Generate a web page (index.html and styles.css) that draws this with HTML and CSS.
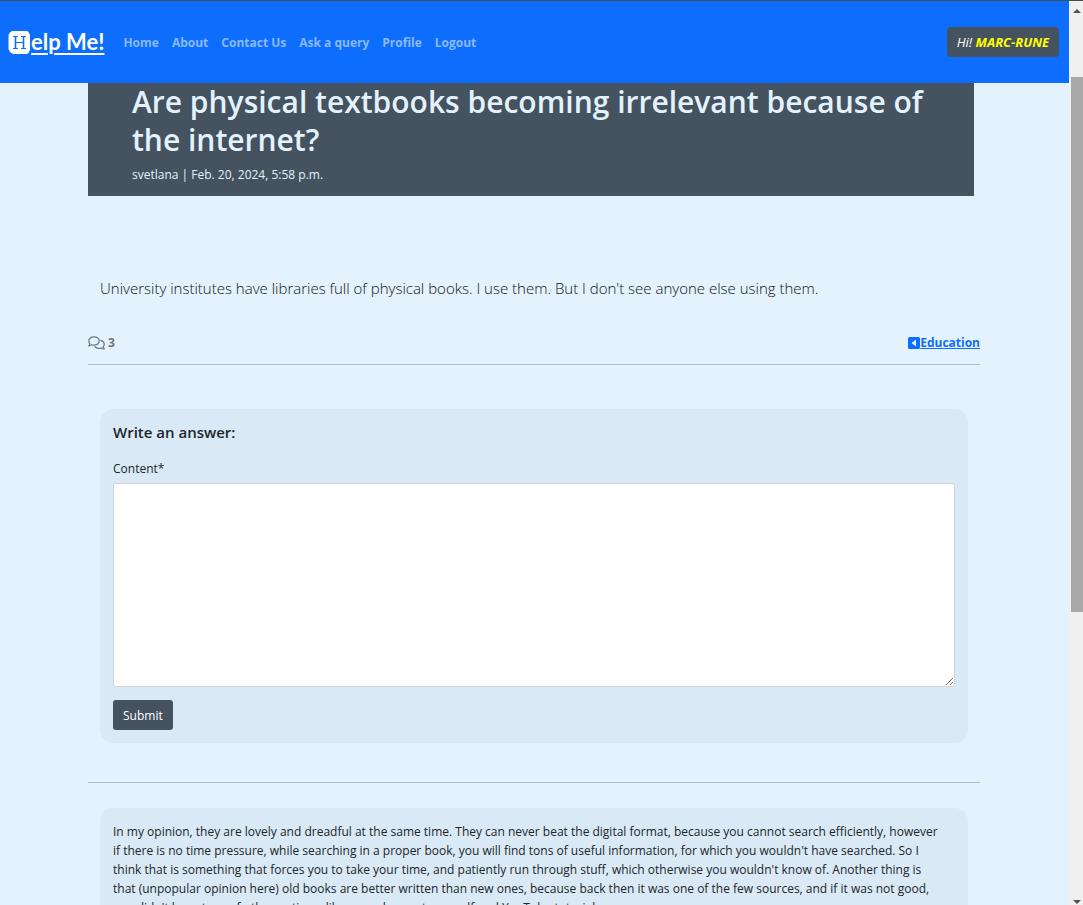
FILE: index.html
```html
<!DOCTYPE html>
<html lang="en">
<head>
<meta charset="utf-8">
<meta name="viewport" content="width=device-width, initial-scale=1">
<title>Help Me!</title>
<link rel="stylesheet" href="styles.css">
</head>
<body>
<div class="viewport">
  <header class="navbar">
    <a class="brand" href="#"><svg class="brand-mark" viewBox="0 0 23 23" aria-hidden="true"><path fill="#fff" d="M4 0h15l1.500 1 1.500 3v15l-1.500 3-1.500 1H5l-3-2-1.500-3V4L2 1.500z"/><path fill="none" stroke="#0d6efd" stroke-width="1" d="M5 5.500h5M13 5.500h5M5 17.500h5M13 17.500h5M8 11.500h7"/><path fill="none" stroke="#0d6efd" stroke-width="1.600" d="M7.500 5.500v12M15.500 5.500v12"/></svg><span class="brand-text">elp Me!</span></a>
    <nav class="links">
      <a href="#">Home</a>
      <a href="#">About</a>
      <a href="#">Contact Us</a>
      <a href="#">Ask a query</a>
      <a href="#">Profile</a>
      <a href="#">Logout</a>
    </nav>
    <button class="user" type="button">Hi! <strong>MARC-RUNE</strong></button>
  </header>
  <main class="page">
    <section class="hero">
      <h1>Are physical textbooks becoming irrelevant because of the internet?</h1>
      <p class="byline">svetlana | Feb. 20, 2024, 5:58 p.m.</p>
    </section>
    <p class="question">University institutes have libraries full of physical books. I use them. But I don't see anyone else using them.</p>
    <div class="meta">
      <span class="count"><svg class="comments" viewBox="0 0 17 14" aria-hidden="true"><path fill="none" stroke="#6c757d" stroke-width="1.200" stroke-linejoin="round" d="M6 .8c3 0 5.200 1.900 5.200 4.200S9 9.200 6 9.200c-.9 0-1.700-.1-2.400-.4C2.800 9.400 1.800 9.800.7 9.800c.6-.6 1-1.300 1.100-2.100C1.100 6.900.8 6 .8 5 .8 2.700 3 .8 6 .8zM12.300 4.300c2.300.4 3.900 2 3.900 3.900 0 1-.4 1.900-1.100 2.600.1.800.6 1.500 1.200 2.200-1.200 0-2.200-.4-3-1-.7.300-1.500.4-2.300.4-1.900 0-3.500-.8-4.400-2"/></svg>3</span>
      <a class="category" href="#"><svg class="caret" viewBox="0 0 12 12" aria-hidden="true"><path fill="#0d6efd" fill-rule="evenodd" d="M1.500 0h9A1.500 1.500 0 0 1 12 1.500v9a1.500 1.500 0 0 1-1.500 1.500h-9A1.500 1.500 0 0 1 0 10.500v-9A1.500 1.500 0 0 1 1.500 0zM8 2.500 3.500 6 8 9.500z"/></svg><span>Education</span></a>
    </div>
    <form class="card answer-form">
      <h2>Write an answer:</h2>
      <label for="content">Content*</label>
      <textarea id="content" name="content" required></textarea>
      <button class="submit" type="button">Submit</button>
    </form>
    <hr class="divider">
    <article class="card reply">
      <p>In my opinion, they are lovely and dreadful at the same time. They can never beat the digital format, because you cannot search efficiently, however if there is no time pressure, while searching in a proper book, you will find tons of useful information, for which you wouldn't have searched. So I think that is something that forces you to take your time, and patiently run through stuff, which otherwise you wouldn't know of. Another thing is that (unpopular opinion here) old books are better written than new ones, because back then it was one of the few sources, and if it was not good, you didn't have tons of other options, like nowadays out yourself and YouTube tutorials.</p>
    </article>
  </main>
</div>
<div class="scrollbar" aria-hidden="true">
  <svg class="arrow" viewBox="0 0 8 4"><path fill="#505050" d="M0 4l4-4 4 4z"/></svg>
  <div class="track"><div class="thumb"></div></div>
  <svg class="arrow" viewBox="0 0 8 4"><path fill="#505050" d="M0 0l4 4 4-4z"/></svg>
</div>
</body>
</html>
```
FILE: styles.css
```css
* { box-sizing: border-box; }
body {
  margin: 0;
  height: 100vh;
  display: flex;
  overflow: hidden;
  border-top: 1px solid #444c56;
  background: #e3f2fd;
  color: #212529;
  font: 12px/19px "Segoe UI", "Open Sans", "Noto Sans", sans-serif;
}
h1, h2, p { margin: 0; }
.viewport { flex: 1; min-width: 0; overflow: hidden; }
.navbar {
  display: flex;
  align-items: center;
  height: 82px;
  padding: 0 10px 0 8px;
  background: #0d6efd;
}
.brand { display: flex; align-items: center; color: #fff; font: 700 22px/32px Lato, sans-serif; text-decoration: none; }
.brand-mark { width: 23px; height: 23px; }
.brand-text { text-decoration: underline; text-decoration-thickness: 2px; text-underline-offset: 3px; }
.links { display: flex; gap: 13px; margin-left: 19px; }
.links a { color: #8ab9fe; font-weight: 700; text-decoration: none; }
.user {
  margin-left: auto;
  height: 30px;
  padding: 0 10px;
  border: 0;
  border-radius: 4px;
  background: #455260;
  color: #fff;
  font: italic 13px/20px "Open Sans", sans-serif;
}
.user strong { color: #ff0; }
.page { padding: 0 89px 0 88px; }
.hero { margin-right: 6px; padding: 0 44px 12px; background: #455260; color: #e3f2fd; }
h1 { font-size: 30px; line-height: 38px; font-weight: 600; }
.byline { margin-top: 6px; line-height: 19px; }
.question { margin-top: 80px; padding: 0 12px; color: #101214; font-size: 15px; line-height: 24px; font-weight: 300; }
.meta {
  display: flex;
  justify-content: space-between;
  margin-top: 33px;
  padding-bottom: 12px;
  border-bottom: 1px solid #b0bfcb;
  font-weight: 700;
}
.count { display: flex; align-items: center; gap: 3px; color: #6c757d; }
.comments { width: 17px; height: 14px; }
.category { display: flex; align-items: center; color: #0d6efd; text-decoration: none; }
.category span { text-decoration: underline; }
.caret { width: 12px; height: 12px; }
.card { margin: 0 12px; padding: 13px; border-radius: 13px; background: #d9eaf6; }
.answer-form { display: flex; flex-direction: column; align-items: flex-start; margin-top: 44px; }
.answer-form h2 { font-size: 15px; line-height: 20px; font-weight: 600; }
.answer-form label { margin: 17px 0 5px; }
.answer-form textarea {
  width: 100%;
  height: 204px;
  border: 1px solid #ced4da;
  border-radius: 3px;
  background: #fff;
  font: inherit;
  resize: vertical;
}
.submit {
  height: 30px;
  margin-top: 13px;
  padding: 0 10px;
  border: 0;
  border-radius: 3px;
  background: #455260;
  color: #fff;
  font: inherit;
}
.divider { margin: 39px 0 25px; border: 0; border-top: 1px solid #b0bfcb; }
.reply { padding: 14px 24px 14px 13px; }
.scrollbar {
  display: flex;
  flex-direction: column;
  align-items: center;
  width: 14px;
  padding: 8px 0 1px 2px;
  background: #f0f0f0;
}
.arrow { width: 8px; height: 4px; }
.track { flex: 1; width: 100%; padding-top: 64px; }
.thumb { height: 65%; background: #a8a8a8; }
```
